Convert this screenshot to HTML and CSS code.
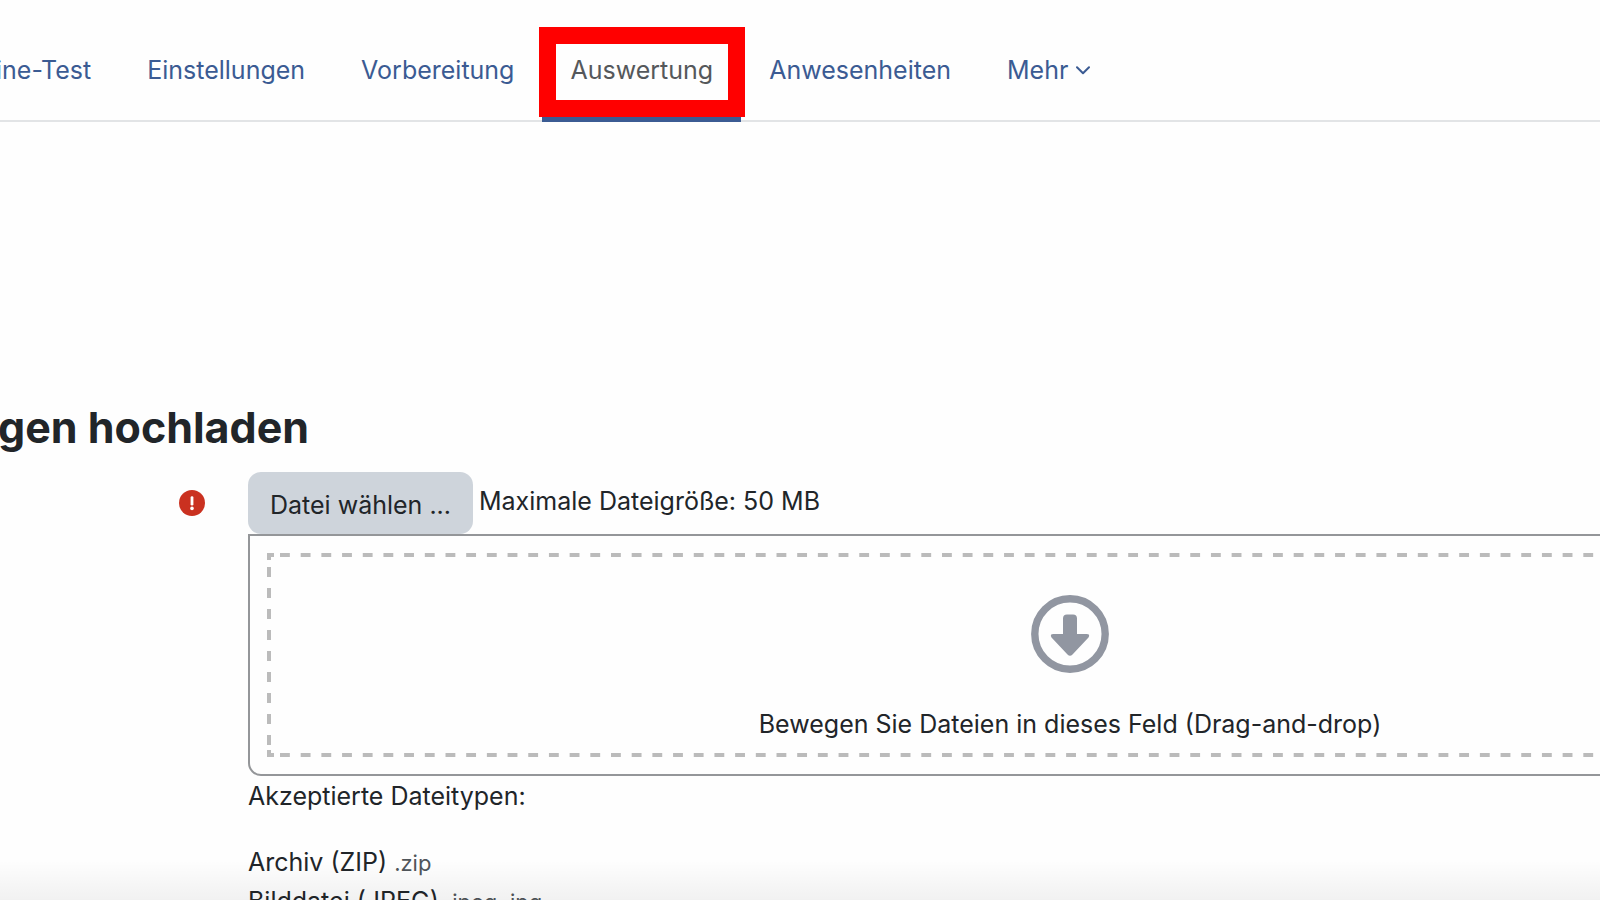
FILE: index.html
```html
<!DOCTYPE html>
<html lang="de">
<head>
<meta charset="utf-8">
<title>Bewertungen hochladen</title>
<link rel="stylesheet" href="styles.css">
</head>
<body>
<nav class="tabs" aria-label="Aktivität">
  <ul class="tab-list">
    <li><a class="tab" href="#test">ine-Test</a></li>
    <li><a class="tab" href="#einstellungen">Einstellungen</a></li>
    <li><a class="tab" href="#vorbereitung">Vorbereitung</a></li>
    <li class="marked"><a class="tab active" href="#auswertung" aria-current="page">Auswertung</a></li>
    <li><a class="tab" href="#anwesenheiten">Anwesenheiten</a></li>
    <li><a class="tab" href="#mehr">Mehr<svg class="chevron" viewBox="0 0 14 9" aria-hidden="true"><path d="M1 1.2l6 6 6-6"/></svg></a></li>
  </ul>
</nav>
<main class="content">
  <h1 class="title">gen hochladen</h1>
  <form class="upload">
    <div class="label">
      <svg class="required" viewBox="0 0 26 26" role="img" aria-label="Erforderlich"><circle cx="13" cy="13" r="13" fill="#ca3120"/><path d="M13 7.6v6.6" stroke="#fff" stroke-width="2.8" stroke-linecap="round"/><circle cx="13" cy="18.4" r="1.8" fill="#fff"/></svg>
    </div>
    <div class="field">
      <div class="picker">
        <button class="choose" type="button">Datei wählen ...</button>
        <span class="limit">Maximale Dateigröße: 50 MB</span>
      </div>
      <div class="dropzone">
        <div class="target">
          <svg class="arrow" viewBox="0 0 78 78" aria-hidden="true"><circle cx="39" cy="39" r="35.2" fill="none" stroke="#9196a1" stroke-width="7.4"/><path d="M36 19.500h6q4 0 4 4V39h9.500q4 0 2 3.400L41.500 59.500q-2.500 2.400-5 0L20.500 42.400q-2-3.400 2-3.400H32V23.500q0-4 4-4z" fill="#9196a1"/></svg>
          <p class="hint">Bewegen Sie Dateien in dieses Feld (Drag-and-drop)</p>
        </div>
      </div>
      <p class="accepted">Akzeptierte Dateitypen:</p>
      <ul class="types">
        <li>Archiv (ZIP) <small class="ext">.zip</small></li>
        <li>Bilddatei (JPEG) <small class="ext">.jpeg .jpg</small></li>
      </ul>
    </div>
  </form>
</main>
<div class="fade"></div>
</body>
</html>
```
FILE: styles.css
```css
* { box-sizing: border-box; }
html, body { height: 100%; }
body {
  margin: 0;
  overflow: hidden;
  background: #fefefe;
  color: #212529;
  font: 25px/38px Inter, "Liberation Sans", sans-serif;
}
ul { list-style: none; margin: 0; padding: 0; }
p { margin: 0; }

.tabs { padding-top: 17px; border-bottom: 2px solid #e2e4e6; }
.tab-list { display: flex; margin: 0 0 -2px -32px; }
.tab {
  display: block;
  padding: 34px 28px 28px;
  border-bottom: 5px solid transparent;
  color: #3b5b93;
  text-decoration: none;
  white-space: nowrap;
}
.active { color: #55585b; border-color: #3b5b93; }
.marked { position: relative; }
.marked::after {
  content: "";
  position: absolute;
  inset: 10px -4px 5px -3px;
  border: 17px solid #ff0000;
  pointer-events: none;
}
.chevron { width: 14px; height: 9px; margin-left: 8px; vertical-align: 4px; fill: none; stroke: #3b5b93; stroke-width: 2; stroke-linecap: round; stroke-linejoin: round; }

.content { padding-top: 279px; }
.title { margin: 0 0 19px -2px; font-size: 43px; line-height: 52px; font-weight: 700; }
.upload { display: grid; grid-template-columns: 205px minmax(0, 1fr); column-gap: 43px; }
.label { display: flex; justify-content: flex-end; padding-top: 18px; }
.required { width: 26px; height: 26px; }
.picker { display: flex; align-items: flex-start; gap: 6px; }
.choose {
  height: 62px;
  padding: 4px 22px 0;
  border: 0;
  border-radius: 13px;
  background: #ced4db;
  color: inherit;
  font: inherit;
}
.limit { padding-top: 10px; }
.dropzone {
  margin-right: -292px;
  padding: 17px;
  border: 2px solid #949699;
  border-radius: 0 0 13px 13px;
}
.target {
  --dash: #bbb;
  position: relative;
  display: flex;
  flex-direction: column;
  align-items: center;
  height: 204px;
  padding-top: 42px;
}
.target::before, .target::after { content: ""; position: absolute; pointer-events: none; }
.target::before {
  inset: 0 0 0 13px;
  background:
    linear-gradient(90deg, var(--dash) 50%, transparent 50%) 0 0 / calc(100% / 77) 4px repeat-x,
    linear-gradient(90deg, var(--dash) 50%, transparent 50%) 0 100% / calc(100% / 77) 4px repeat-x;
}
.target::after {
  inset: 0;
  background:
    linear-gradient(var(--dash), var(--dash)) 0 0 / 7px 4px no-repeat,
    linear-gradient(var(--dash), var(--dash)) 0 0 / 4px 7px no-repeat,
    linear-gradient(var(--dash), var(--dash)) 0 100% / 7px 4px no-repeat,
    linear-gradient(var(--dash), var(--dash)) 0 100% / 4px 7px no-repeat,
    linear-gradient(var(--dash) 50%, transparent 50%) 0 14px / 4px 21px repeat-y;
}
.arrow { width: 78px; height: 78px; }
.hint { margin-top: 32px; }
.accepted { margin: 1px 0 28px; }
.types { line-height: 38px; }
.ext { font-size: 22px; color: #50555a; }
.fade {
  position: absolute;
  inset: auto 0 0;
  height: 40px;
  background: linear-gradient(transparent, rgba(0, 0, 0, 0.05));
  pointer-events: none;
}
```
